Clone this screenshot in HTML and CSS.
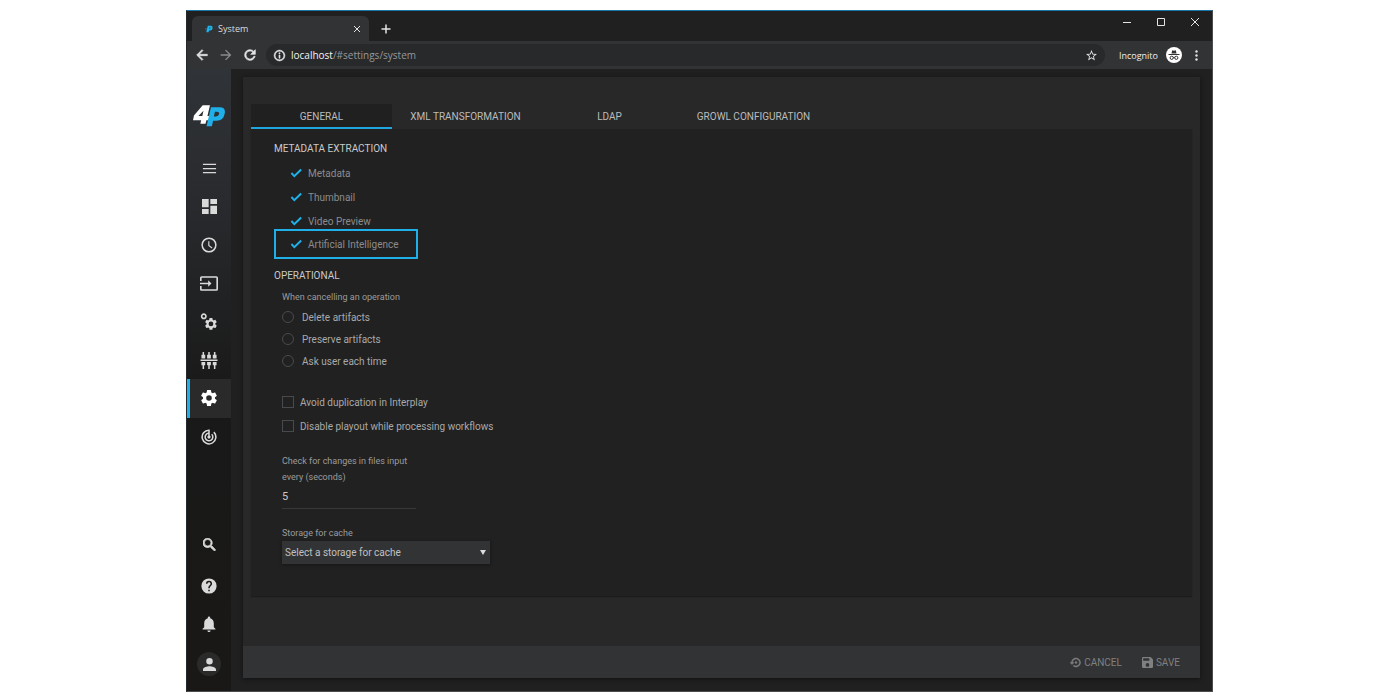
FILE: index.html
```html
<!DOCTYPE html>
<html lang="en">
<head>
<meta charset="utf-8">
<title>System</title>
<link rel="stylesheet" href="styles.css">
</head>
<body>
<div class="window">
  <header class="titlebar">
    <div class="browser-tab">
      <svg class="favicon" viewBox="0 0 10 10" aria-hidden="true"><path fill="#1d6f94" d="M0 4h4v1.500H0zM1 7h2v1H1z"/><path fill="#1fb4ea" fill-rule="evenodd" d="M3.500 1h4q2.500.4 2 3Q9 6.800 6.500 6.800H5L4.500 9H1.800zM5.500 3l-.4 1.500h1.500L7 3z"/></svg>
      <span class="browser-tab-title">System</span>
      <button class="plain tab-close" aria-label="Close tab"><svg class="i8" viewBox="0 0 8 8"><path class="line" d="M1 1l6 6M7 1l-6 6"/></svg></button>
    </div>
    <button class="plain new-tab" aria-label="New tab"><svg class="i10" viewBox="0 0 10 10"><path class="line thick" d="M5 .5v9M.5 5h9"/></svg></button>
    <div class="window-controls">
      <button class="plain" aria-label="Minimize"><svg class="i10" viewBox="0 0 10 10"><path class="line" d="M1 5.500h8"/></svg></button>
      <button class="plain" aria-label="Maximize"><svg class="i10" viewBox="0 0 10 10"><path class="line" d="M1.500 1.500h7v7h-7z"/></svg></button>
      <button class="plain" aria-label="Close"><svg class="i10" viewBox="0 0 10 10"><path class="line" d="M1 1l8 8M9 1L1 9"/></svg></button>
    </div>
  </header>

  <div class="toolbar">
    <button class="plain" aria-label="Back"><svg class="i16" viewBox="0 0 24 24"><path class="bold" d="M20 11H7.830l5.590-5.590L12 4l-8 8 8 8 1.410-1.410L7.830 13H20v-2z"/></svg></button>
    <button class="plain dim" aria-label="Forward"><svg class="i16" viewBox="0 0 24 24"><path d="M12 4l-1.410 1.410L16.170 11H4v2h12.170l-5.580 5.590L12 20l8-8z"/></svg></button>
    <button class="plain" aria-label="Reload"><svg class="i16" viewBox="0 0 24 24"><path class="bold" d="M17.650 6.350A7.960 7.960 0 0 0 12 4a8 8 0 1 0 7.730 10h-2.080A6 6 0 1 1 12 6c1.660 0 3.140.69 4.220 1.780L13 11h7V4z"/></svg></button>
    <div class="address">
      <svg class="i14" viewBox="0 0 24 24"><path class="bold" d="M11 7h2v2h-2zm0 4h2v6h-2zm1-9a10 10 0 1 0 0 20 10 10 0 0 0 0-20zm0 18a8 8 0 1 1 0-16 8 8 0 0 1 0 16z"/></svg>
      <div class="url" role="textbox" aria-label="Address"><span class="host">localhost</span>/#settings/system</div>
      <button class="plain" aria-label="Bookmark"><svg class="i14" viewBox="0 0 24 24"><path d="M22 9.240l-7.190-.62L12 2 9.190 8.630 2 9.240l5.460 4.730L5.820 21 12 17.270 18.180 21l-1.630-7.030zM12 15.400l-3.760 2.270 1-4.280-3.320-2.880 4.380-.38L12 6.100l1.710 4.040 4.380.38-3.320 2.880 1 4.280z"/></svg></button>
    </div>
    <span class="incognito">Incognito</span>
    <svg class="i16" viewBox="0 0 16 16" aria-hidden="true"><circle cx="8" cy="8" r="8" fill="#fff"/><path fill="#333" d="M5.500 6.500L6.200 3.300q1.800.7 3.600 0l.7 3.200zM2.500 7h11v1h-11z"/><g fill="none" stroke="#333"><circle cx="5.700" cy="10.800" r="1.600"/><circle cx="10.300" cy="10.800" r="1.600"/><path d="M7.200 10.400h1.600"/></g></svg>
    <button class="plain" aria-label="Menu"><svg class="i14" viewBox="0 0 24 24"><circle cx="12" cy="4.500" r="2.200"/><circle cx="12" cy="12" r="2.200"/><circle cx="12" cy="19.500" r="2.200"/></svg></button>
  </div>

  <div class="app">
    <aside class="sidebar">
      <svg class="logo" viewBox="0 0 33 22" role="img" aria-label="4P"><path fill="#fff" fill-rule="evenodd" d="M10 0h7.500l-2.600 11H17l-1 4.500h-2.200L12.900 19H7.600l.8-3.500H0l1-5zM10.800 5.500L5.600 11h4z"/><path fill="#1fb0ea" fill-rule="evenodd" d="M18.500 2h9q6.500 0 5.200 6.500-1.200 7.500-8.500 7.500h-3.500l-1.200 5.500h-5.500zM22.600 6.500L21.500 11.500h2.200q2.700 0 3.200-2.500.6-2.500-2-2.500z"/></svg>
      <nav class="nav" aria-label="Main">
        <a href="#menu" aria-label="Menu"><svg viewBox="0 0 24 24"><path d="M1.500 4.500h21v2h-21zM1.500 11h21v2h-21zM1.500 17.500h21v2h-21z"/></svg></a>
        <a href="#dashboard" aria-label="Dashboard"><svg viewBox="3 3 18 18"><path d="M3 13h8V3H3zm0 8h8v-6H3zm10 0h8V11h-8zm0-18v6h8V3z"/></svg></a>
        <a href="#history" aria-label="History"><svg viewBox="1.500 1.500 21 21"><path d="M12 2a10 10 0 1 0 0 20 10 10 0 0 0 0-20zm0 18a8 8 0 1 1 0-16 8 8 0 0 1 0 16zm.5-13H11v6l4.500 3.500 1-1.300-4-3z"/></svg></a>
        <a href="#input" aria-label="Input"><svg class="wide" viewBox="1 3 22 18"><path d="M21 3H3a2 2 0 0 0-2 2v4h2V5h18v14H3v-4H1v4c0 1.100.9 2 2 2h18a2 2 0 0 0 2-2V5a2 2 0 0 0-2-2zM11 16l4-4-4-4v3H1v2h10z"/></svg></a>
        <a href="#processes" aria-label="Processes"><svg class="wide" viewBox="0 0 18 18"><circle cx="3.500" cy="3.500" r="2.300" fill="none" stroke="#dadada" stroke-width="1.700"/><g transform="translate(3.500 4) scale(.63)"><path d="M19.430 12.980a7.800 7.800 0 0 0 0-1.960l2.110-1.650a.5.500 0 0 0 .12-.64l-2-3.460a.5.500 0 0 0-.61-.22l-2.490 1a7.300 7.300 0 0 0-1.690-.98l-.38-2.650A.5.500 0 0 0 14 2h-4a.5.500 0 0 0-.49.420l-.38 2.650a7.700 7.700 0 0 0-1.690.98l-2.490-1a.5.500 0 0 0-.61.220l-2 3.460a.5.500 0 0 0 .12.640l2.110 1.650a8 8 0 0 0 0 1.960l-2.110 1.650a.5.500 0 0 0-.12.640l2 3.460c.12.220.39.300.61.220l2.490-1c.52.400 1.080.73 1.690.98l.38 2.650c.3.240.24.420.49.420h4a.5.500 0 0 0 .49-.42l.38-2.650a7.700 7.700 0 0 0 1.690-.98l2.490 1c.23.090.49 0 .61-.22l2-3.460a.5.500 0 0 0-.12-.64zM12 16a4 4 0 1 1 0-8 4 4 0 0 1 0 8z"/></g></svg></a>
        <a href="#workflows" aria-label="Workflows"><svg class="wide" viewBox="0 0 18 18"><path d="M2.200 0h1.600v3H5v4H1V3h1.200zM8.200 0h1.600v3H11v4H7V3h1.200zM14.200 0h1.600v3H17v4h-4V3h1.200zM0 8h18v1.500H0zM1 10.500h4V14H3.800v4H2.200v-4H1zM7 10.500h4V14H9.800v4H8.200v-4H7zM13 10.500h4V14h-1.200v4h-1.600v-4H13z"/></svg></a>
        <a class="active" href="#settings" aria-label="Settings"><svg viewBox="2 2 20 20"><path d="M19.430 12.980a7.800 7.800 0 0 0 0-1.960l2.110-1.650a.5.500 0 0 0 .12-.64l-2-3.460a.5.500 0 0 0-.61-.22l-2.490 1a7.300 7.300 0 0 0-1.690-.98l-.38-2.650A.5.500 0 0 0 14 2h-4a.5.500 0 0 0-.49.420l-.38 2.650a7.700 7.700 0 0 0-1.690.98l-2.490-1a.5.500 0 0 0-.61.220l-2 3.460a.5.500 0 0 0 .12.640l2.110 1.650a8 8 0 0 0 0 1.960l-2.110 1.650a.5.500 0 0 0-.12.640l2 3.460c.12.220.39.300.61.220l2.490-1c.52.400 1.080.73 1.690.98l.38 2.650c.3.240.24.420.49.420h4a.5.500 0 0 0 .49-.42l.38-2.650a7.700 7.700 0 0 0 1.690-.98l2.490 1c.23.090.49 0 .61-.22l2-3.460a.5.500 0 0 0-.12-.64zM12 15.500a3.500 3.500 0 1 1 0-7 3.500 3.500 0 0 1 0 7z"/></svg></a>
        <a href="#monitor" aria-label="Monitor"><svg viewBox="1.500 1.500 21 21"><path d="M19.070 4.930l-1.410 1.410A8 8 0 1 1 11 4.070v2.020a6 6 0 1 0 5.240 1.670l-1.410 1.410A4 4 0 1 1 11 8.140v2.140a2 2 0 1 0 2 0V2h-1a10 10 0 1 0 7.070 2.930z"/></svg></a>
      </nav>
      <nav class="nav-bottom" aria-label="Tools">
        <a class="search" href="#search" aria-label="Search"><svg class="small" viewBox="3 3 18 18"><path class="bold" d="M15.500 14h-.79l-.28-.27A6.500 6.500 0 1 0 13 15.100l.7.300v.790L19 21l1.500-1.500zm-6 0a4.500 4.500 0 1 1 0-9 4.500 4.500 0 0 1 0 9z"/></svg></a>
        <a class="help" href="#help" aria-label="Help"><svg viewBox="1.500 1.500 21 21"><path d="M12 2a10 10 0 1 0 0 20 10 10 0 0 0 0-20zm1 17h-2v-2h2zm2.070-7.750l-.9.920C13.450 12.900 13 13.500 13 15h-2v-.5c0-1.100.45-2.100 1.170-2.830l1.240-1.260A2 2 0 1 0 10 9H8a4 4 0 1 1 8 0c0 .88-.36 1.680-.93 2.250z"/></svg></a>
        <a class="alerts" href="#notifications" aria-label="Notifications"><svg viewBox="2 2 20 20"><path d="M12 22a2 2 0 0 0 2-2h-4c0 1.100.89 2 2 2zm6-6v-5c0-3.070-1.640-5.640-4.500-6.320V4a1.500 1.500 0 0 0-3 0v.68C7.630 5.360 6 7.920 6 11v5l-2 2v1h16v-1z"/></svg></a>
        <a class="account" href="#account" aria-label="Account"><span class="avatar"><svg class="small" viewBox="4 4 16 16"><path d="M12 12a4 4 0 1 0 0-8 4 4 0 0 0 0 8zm0 2c-2.670 0-8 1.340-8 4v2h16v-2c0-2.660-5.330-4-8-4z"/></svg></span></a>
      </nav>
    </aside>

    <main class="content">
      <form class="panel">
        <div class="panel-body">
          <div class="tabs" role="tablist">
            <button type="button" class="tab selected" role="tab" aria-selected="true">GENERAL</button>
            <button type="button" class="tab" role="tab">XML TRANSFORMATION</button>
            <button type="button" class="tab" role="tab">LDAP</button>
            <button type="button" class="tab" role="tab">GROWL CONFIGURATION</button>
          </div>
          <section class="card">
            <h2>METADATA EXTRACTION</h2>
            <div class="extraction">
              <label><input class="tick" type="checkbox" checked>Metadata</label>
              <label><input class="tick" type="checkbox" checked>Thumbnail</label>
              <label><input class="tick" type="checkbox" checked>Video Preview</label>
              <label class="highlight"><input class="tick" type="checkbox" checked>Artificial Intelligence</label>
            </div>
            <h2>OPERATIONAL</h2>
            <div class="operational">
              <fieldset>
                <legend>When cancelling an operation</legend>
                <label><input class="radio" type="radio" name="cancel">Delete artifacts</label>
                <label><input class="radio" type="radio" name="cancel">Preserve artifacts</label>
                <label><input class="radio" type="radio" name="cancel">Ask user each time</label>
              </fieldset>
              <div class="options">
                <label><input class="box" type="checkbox">Avoid duplication in Interplay</label>
                <label><input class="box" type="checkbox">Disable playout while processing workflows</label>
              </div>
              <div class="field interval">
                <label for="interval">Check for changes in files input every (seconds)</label>
                <input id="interval" type="text" value="5">
              </div>
              <div class="field storage">
                <label for="storage">Storage for cache</label>
                <div class="select-wrap">
                  <select id="storage"><option>Select a storage for cache</option></select>
                </div>
              </div>
            </div>
          </section>
        </div>
        <footer class="actions">
          <button type="button"><svg class="i12" viewBox="0 2 22 20"><path class="bold" d="M14 12a2 2 0 1 0-4 0 2 2 0 0 0 4 0zm-2-9a9 9 0 0 0-9 9H0l4 4 4-4H5a7 7 0 1 1 2.940 5.700l-1.420 1.440A9 9 0 1 0 12 3z"/></svg>CANCEL</button>
          <button type="button"><svg class="i12" viewBox="3 3 18 18"><path d="M17 3H5a2 2 0 0 0-2 2v14c0 1.100.89 2 2 2h14a2 2 0 0 0 2-2V7zm-5 16a3 3 0 1 1 0-6 3 3 0 0 1 0 6zm3-10H5V5h10z"/></svg>SAVE</button>
        </footer>
      </form>
    </main>
  </div>
</div>
</body>
</html>
```

FILE: styles.css
```css
* { box-sizing: border-box; }

body {
  margin: 0;
  padding: 10px 187px 8px 186px;
  background: #fff;
  font-family: Roboto, "Liberation Sans", sans-serif;
  font-size: 10px;
  color: #a9a9a9;
}

button, input, select {
  font: inherit;
  color: inherit;
  margin: 0;
}

svg { display: block; fill: currentColor; flex: none; }
.i8 { width: 8px; height: 8px; }
.i10 { width: 10px; height: 10px; }
.i12 { width: 11px; height: 11px; }
.i14 { width: 13px; height: 13px; }
.i16 { width: 16px; height: 16px; }
.line { fill: none; stroke: currentColor; stroke-width: 1; }
.thick { stroke-width: 1.5; }
.bold { stroke: currentColor; stroke-width: 1; }

.plain {
  display: flex;
  align-items: center;
  padding: 0;
  border: 0;
  background: none;
  color: #e4e4e4;
}

.window {
  display: flex;
  flex-direction: column;
  min-height: calc(100vh - 18px);
  border: 1px solid #4a4c4e;
  border-top-color: #1a77a8;
  border-left-color: #24292d;
  background: #202020;
}

/* Browser chrome */
.titlebar {
  display: flex;
  height: 30px;
  padding-left: 5px;
}
.browser-tab {
  display: flex;
  align-items: center;
  width: 177px;
  margin-top: 5px;
  padding: 0 8px 0 13px;
  border-radius: 6px 6px 0 0;
  background: #323335;
  font-family: "Open Sans", "Noto Sans", sans-serif;
  font-size: 9px;
  color: #dcdcdc;
}
.favicon { width: 8px; height: 8px; margin-right: 5px; }
.browser-tab-title { flex: 1; }
.new-tab { margin: 6px 0 0 12px; }
.window-controls {
  display: flex;
  align-items: center;
  gap: 24px;
  margin-left: auto;
  padding: 0 12px 9px 0;
}

.toolbar {
  display: flex;
  align-items: center;
  gap: 8px;
  height: 28px;
  padding: 0 9px 0 7px;
  background: #323335;
  font-family: "Open Sans", "Noto Sans", sans-serif;
  font-size: 10px;
}
.dim { color: #8c8c8c; }
.address {
  display: flex;
  flex: 1;
  align-items: center;
  gap: 5px;
  height: 22px;
  margin-right: 6px;
  padding: 0 7px;
  border-radius: 11px;
  background: #27292b;
  color: #e4e4e4;
}
.url { flex: 1; color: #96989a; }
.host { color: #f4f4f4; }
.incognito { font-size: 9px; color: #eee; }

/* Application */
.app { display: flex; flex: 1; }

.sidebar {
  display: flex;
  flex-direction: column;
  width: 44px;
  padding: 36px 0 3px;
  background: linear-gradient(#303337, #282a2d 22%, #191919 52%, #191816);
  color: #dadada;
}
.logo { width: 32px; height: 22px; margin: 0 0 22px 6px; }
.nav { display: flex; flex-direction: column; height: 307px; }
.nav a, .nav-bottom a {
  display: flex;
  flex: 1;
  align-items: center;
  justify-content: center;
  color: inherit;
}
.sidebar svg:not(.logo) { width: 16px; height: 16px; }
.nav a:first-child svg, .nav a:nth-child(2) svg { width: 15px; height: 15px; }
.sidebar .wide:not(.logo) { width: 18px; height: 17px; }
.sidebar .small:not(.logo) { width: 13px; height: 13px; }
.nav .active {
  border-left: 3px solid #1fb0ea;
  padding-right: 3px;
  background: #2a2a2a;
  color: #fff;
}
.nav-bottom { margin-top: auto; }
.nav-bottom a { height: 40px; }
.nav-bottom .help { height: 44px; }
.nav-bottom .alerts { height: 32px; }
.nav-bottom .account { height: 48px; }
.avatar {
  display: grid;
  place-items: center;
  width: 24px;
  height: 24px;
  border-radius: 50%;
  background: #2a2a2a;
}

.content {
  display: flex;
  flex: 1;
  padding: 8px 12px 13px;
}
.panel {
  display: flex;
  flex: 1;
  flex-direction: column;
  background: #282828;
  box-shadow: 0 1px 4px #111;
}
.panel-body {
  display: flex;
  flex: 1;
  flex-direction: column;
  padding: 27px 8px 50px;
}

.tabs { display: flex; }
.tab {
  min-width: 141px;
  height: 25px;
  padding: 2px 0 0;
  border: 0;
  border-bottom: 2px solid transparent;
  background: none;
  color: #bcbcbc;
}
.tab:nth-child(2), .tab:nth-child(4) { min-width: 147px; }
.tab.selected {
  border-color: #1fa6df;
  background: #202020;
}

.card {
  flex: 1;
  padding: 13px 23px;
  background: #212121;
  box-shadow: 0 1px 1px #1c1c1c;
}
h2 {
  margin: 0;
  font-size: 10px;
  font-weight: 400;
  line-height: 14px;
  color: #cacaca;
}
.card label { display: flex; align-items: center; }
.card input { appearance: none; flex: none; border-radius: 0; }

.extraction { padding-top: 5px; margin-bottom: 10px; }
.extraction label {
  height: 24px;
  padding-left: 15px;
  color: #8c8c8c;
}
.extraction .highlight {
  width: 144px;
  height: 30px;
  margin-top: -4px;
  padding-left: 13px;
  border: 2px solid #1fb0ea;
}
.tick {
  width: 14px;
  height: 14px;
  margin-right: 5px;
}
.tick:checked {
  background: #1fb0ea;
  clip-path: polygon(38% 62%, 22% 45%, 12% 55%, 38% 83%, 92% 30%, 82% 20%);
}

.operational { padding-left: 8px; }
fieldset { margin: 0; padding: 0; border: 0; }
legend {
  padding: 8px 0 2px;
  font-size: 9px;
  line-height: 13px;
  color: #9c9c9c;
}
fieldset label { height: 22px; }
.radio {
  width: 12px;
  height: 12px;
  margin-right: 8px;
  border: 1px solid #484b4e;
}
.card .radio { border-radius: 50%; }
.radio:checked { background: #1fb0ea; }

.options { margin-top: 18px; }
.options label { height: 24px; }
.box {
  width: 12px;
  height: 12px;
  margin-right: 6px;
  border: 1px solid #484b4e;
}
.box:checked { background: #1fb0ea; }

.field label { font-size: 9px; line-height: 16px; color: #9c9c9c; }
.interval { width: 134px; margin-top: 15px; }
.interval input {
  display: block;
  width: 100%;
  height: 24px;
  padding: 0;
  border: 0;
  border-bottom: 1px solid #36383a;
  background: none;
  font-size: 11px;
  color: #c8c8c8;
}
.storage { width: 208px; margin-top: 16px; }
.select-wrap {
  display: grid;
  align-items: center;
  background: #323335;
  box-shadow: 0 1px 3px #151515;
}
.select-wrap::after {
  content: "";
  grid-area: 1 / 1;
  justify-self: end;
  margin-right: 4px;
  border: 3px solid transparent;
  border-top: 5px solid #ddd;
  border-bottom: 0;
  pointer-events: none;
}
select {
  grid-area: 1 / 1;
  appearance: none;
  height: 23px;
  padding: 0 3px;
  border: 0;
  border-radius: 0;
  background: none;
}
.storage select { color: #c0c0c0; }

.actions {
  display: flex;
  align-items: center;
  justify-content: flex-end;
  gap: 20px;
  height: 32px;
  padding-right: 20px;
  background: #323335;
}
.actions button {
  display: flex;
  align-items: center;
  gap: 3px;
  padding: 0;
  border: 0;
  background: none;
  color: #808080;
}
```
